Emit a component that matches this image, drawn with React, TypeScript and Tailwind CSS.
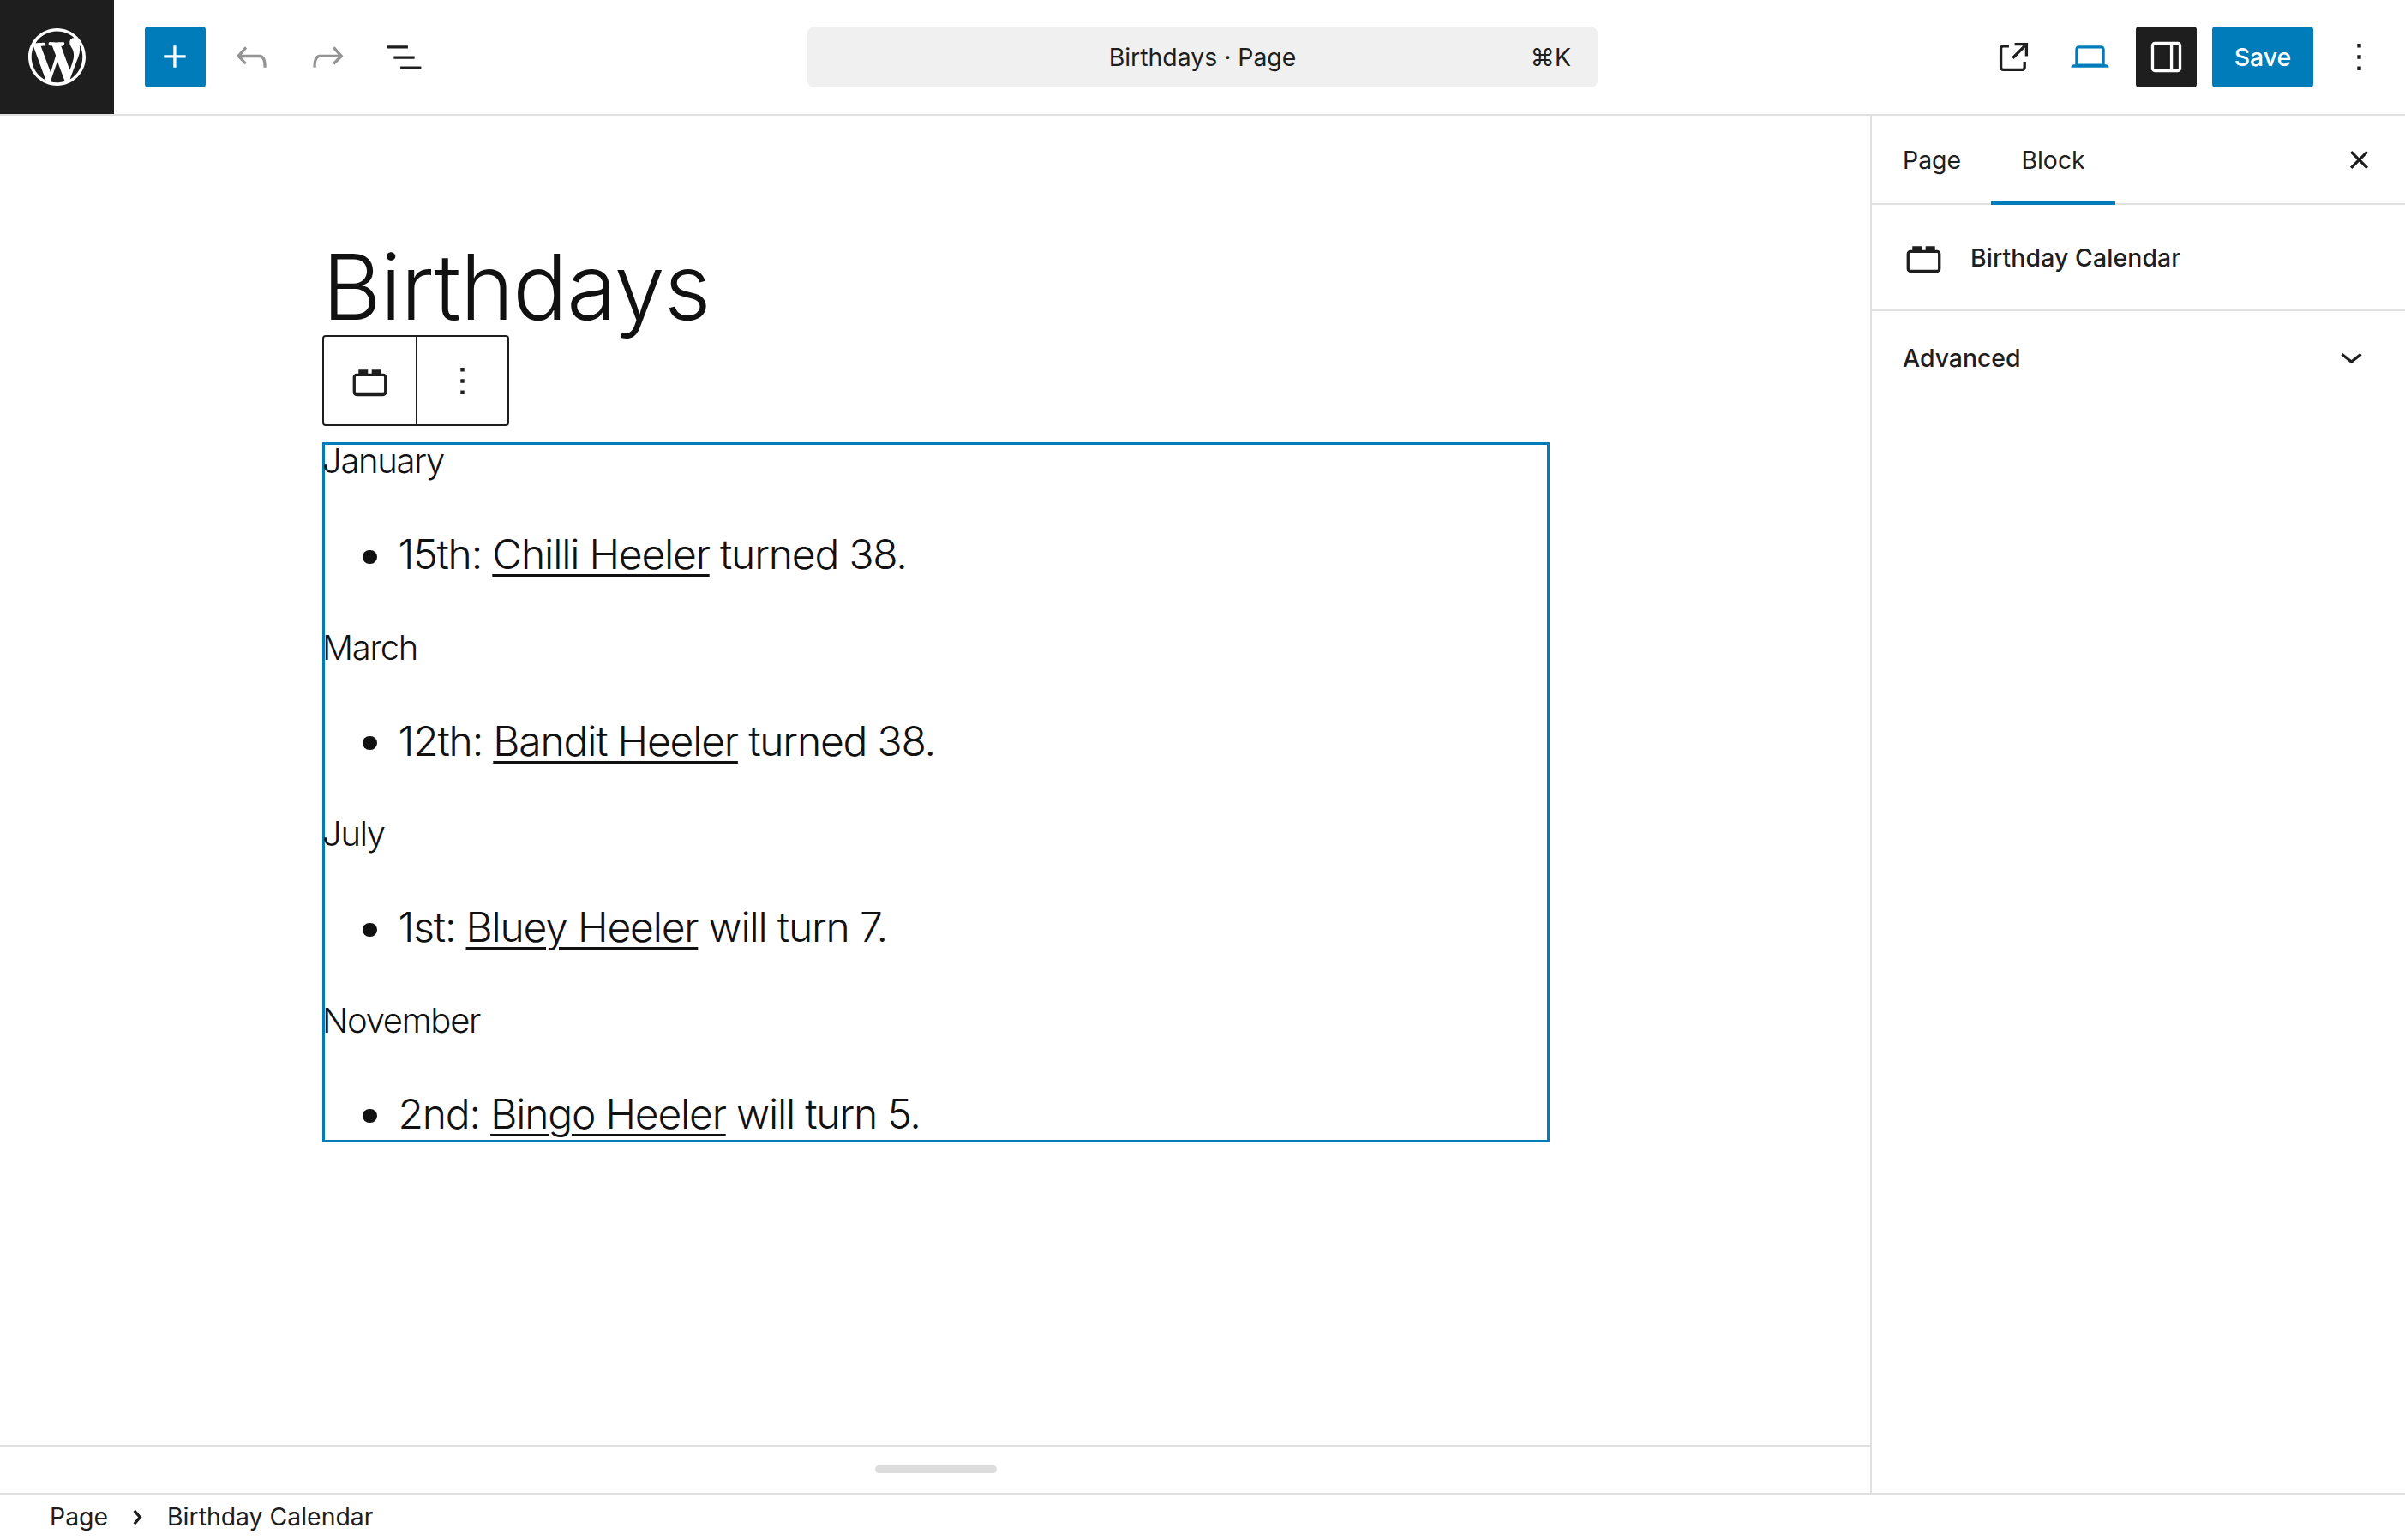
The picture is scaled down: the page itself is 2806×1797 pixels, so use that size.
import React from "react";

const P = {
  wp: "M20 10c0-5.51-4.49-10-10-10C4.48 0 0 4.49 0 10c0 5.52 4.48 10 10 10 5.51 0 10-4.48 10-10zM7.78 15.37L4.37 6.22c.55-.02 1.17-.08 1.17-.08.5-.06.44-1.13-.06-1.11 0 0-1.45.11-2.37.11-.18 0-.37 0-.58-.01C4.12 2.69 6.87 1.07 10 1.07c2.33 0 4.45.87 6.05 2.34-.68-.11-1.65.39-1.65 1.58 0 .74.45 1.36.9 2.1.35.61.55 1.36.55 2.46 0 1.49-1.4 5-1.4 5l-3.03-8.37c.54-.02.82-.17.82-.17.5-.05.44-1.25-.06-1.22 0 0-1.44.12-2.38.12-.87 0-2.33-.12-2.33-.12-.5-.03-.56 1.2-.06 1.22l.92.08 1.26 3.41zM17.41 10c.24-.64.74-1.87.43-4.25.7 1.29 1.05 2.71 1.05 4.25 0 3.29-1.73 6.24-4.4 7.78.97-2.59 1.94-5.2 2.92-7.78zM6.1 18.09C3.12 16.65 1.11 13.53 1.11 10c0-1.3.23-2.48.72-3.59C3.25 10.3 4.67 14.2 6.1 18.09zm4.03-6.63l2.58 6.98c-.86.29-1.76.45-2.71.45-.79 0-1.57-.11-2.29-.33.81-2.38 1.62-4.74 2.42-7.1z",
  plus: "M11 12.5V17.5H12.5V12.5H17.5V11H12.5V6H11V11H6V12.5H11Z",
  undo: "M18.3 11.7c-.6-.6-1.4-.9-2.3-.9H6.7l2.9-3.3-1.1-1-4.5 5L8.5 16l1-1-2.7-2.7H16c.5 0 .9.2 1.3.5 1 1 1 3.4 1 4.5v.3h1.5v-.2c0-1.5 0-4.3-1.5-5.7z",
  redo: "M15.6 6.5l-1.1 1 2.9 3.3H8c-.9 0-1.7.3-2.3.9-1.4 1.5-1.4 4.2-1.4 5.6v.2h1.5v-.3c0-1.1 0-3.5 1-4.5.3-.3.7-.5 1.3-.5h9.2L14.5 15l1.1 1.1 4.6-4.6-4.6-5z",
  list: "M3 6h11v1.5H3V6Zm3.5 5.5h11V13h-11v-1.5ZM21 17H10v1.5h11V17Z",
  ext: "M19.5 4.5h-7V6h4.44l-5.97 6.03 1.06 1.06L18 7.06V11.5h1.5v-7Zm-13 1a2 2 0 0 0-2 2v10a2 2 0 0 0 2 2h10a2 2 0 0 0 2-2v-3H17v3a.5.5 0 0 1-.5.5h-10a.5.5 0 0 1-.5-.5v-10a.5.5 0 0 1 .5-.5h3V5.5h-3Z",
  laptop: "M20.5 16h-.7V8c0-1.1-.9-2-2-2H6.2c-1.1 0-2 .9-2 2v8h-.7c-.8 0-1.5.7-1.5 1.5h20c0-.8-.7-1.5-1.5-1.5zM5.7 8c0-.3.2-.5.5-.5h11.6c.3 0 .5.2.5.5v7.6H5.7V8z",
  drawer: "M18 4H6c-1.1 0-2 .9-2 2v12c0 1.1.9 2 2 2h12c1.1 0 2-.9 2-2V6c0-1.1-.9-2-2-2zm-4 14.5H6c-.3 0-.5-.2-.5-.5V6c0-.3.2-.5.5-.5h8v13zm4.5-.5c0 .3-.2.5-.5.5h-2.5v-13H18c.3 0 .5.2.5.5v12z",
  more: "M13 19h-2v-2h2v2zm0-6h-2v-2h2v2zm0-6h-2V5h2v2z",
  close: "M12 13.06l3.712 3.713 1.061-1.06L13.061 12l3.712-3.712-1.06-1.06L12 10.938 8.288 7.227l-1.061 1.06L10.939 12l-3.712 3.712 1.06 1.061L12 13.061z",
  down: "M17.5 11.6L12 16l-5.5-4.4.9-1.2L12 14l4.5-3.6 1 1.2z",
  right: "M10.8622 8.04053L14.2805 12.0286L10.8622 16.0167L9.72327 15.0405L12.3049 12.0286L9.72327 9.01672L10.8622 8.04053Z",
  block: "M19 8h-1V6h-5v2h-2V6H6v2H5c-1.1 0-2 .9-2 2v8c0 1.1.9 2 2 2h14c1.1 0 2-.9 2-2v-8c0-1.1-.9-2-2-2zm.5 10c0 .3-.2.5-.5.5H5c-.3 0-.5-.2-.5-.5v-8c0-.3.2-.5.5-.5h14c.3 0 .5.2.5.5v8z",
};

function Icon({ d, className = "w-[53px] h-[53px]", box = "0 0 24 24" }: { d: string; className?: string; box?: string }) {
  return (
    <svg viewBox={box} className={className} fill="currentColor" aria-hidden="true">
      <path d={d} />
    </svg>
  );
}

function IconBtn({ d, className = "text-[#1e1e1e]" }: { d: string; className?: string }) {
  return (
    <button className={`w-[71px] h-[71px] flex items-center justify-center rounded-[4px] shrink-0 ${className}`}>
      <Icon d={d} />
    </button>
  );
}

const entries = [
  { month: "January", pre: "15th: ", name: "Chilli Heeler", post: " turned 38." },
  { month: "March", pre: "12th: ", name: "Bandit Heeler", post: " turned 38." },
  { month: "July", pre: "1st: ", name: "Bluey Heeler", post: " will turn 7." },
  { month: "November", pre: "2nd: ", name: "Bingo Heeler", post: " will turn 5." },
];

export default function App() {
  return (
    <div className="w-[2806px] h-[1797px] flex flex-col bg-white overflow-hidden font-['Inter',sans-serif] text-[#1e1e1e] text-[28.4px]">
      <header className="h-[135px] shrink-0 flex items-start border-b-2 border-[#e0e0e0]">
        <div className="flex-1 flex items-center h-[133px] pr-[18px]">
          <div className="w-[133px] h-[133px] bg-[#1e1e1e] flex items-center justify-center text-white shrink-0">
            <Icon d={P.wp} box="0 0 20 20" className="w-[67px] h-[67px]" />
          </div>
          <div className="flex items-center gap-[18px] ml-[36px]">
            <button className="w-[71px] h-[71px] bg-[#007cba] text-white rounded-[4px] flex items-center justify-center">
              <Icon d={P.plus} />
            </button>
            <IconBtn d={P.undo} className="text-[#949494]" />
            <IconBtn d={P.redo} className="text-[#949494]" />
            <IconBtn d={P.list} />
          </div>
        </div>
        <div className="w-[922px] h-[71px] mt-[31px] bg-[#f0f0f0] rounded-[8px] flex items-center shrink-0 relative">
          <span className="flex-1 text-center pt-[1px]">Birthdays · Page</span>
          <span className="absolute right-[31px] top-[15px]">⌘K</span>
        </div>
        <div className="flex-1 flex items-center justify-end gap-[18px] h-[133px] pr-[18px]">
          <IconBtn d={P.ext} />
          <IconBtn d={P.laptop} className="text-[#007cba]" />
          <IconBtn d={P.drawer} className="bg-[#1e1e1e] text-white" />
          <button className="w-[118px] h-[71px] bg-[#007cba] text-white rounded-[4px] font-medium pt-[1px]">Save</button>
          <IconBtn d={P.more} />
        </div>
      </header>

      <div className="flex-1 min-h-0 flex border-b-2 border-[#e0e0e0]">
        <main className="w-[2182px] shrink-0 flex flex-col">
          <div className="flex-1 min-h-0">
            <div className="w-[1432px] ml-[376px]">
              <h1 className="text-[106px] font-light leading-[120px] tracking-[-1px] text-[#111111] pt-[140px] h-[256px]">Birthdays</h1>
              <div className="w-[218px] h-[106px] border-2 border-[#1e1e1e] rounded-[4px] flex bg-white">
                <div className="w-[109px] border-r-2 border-[#1e1e1e] flex items-center justify-center">
                  <Icon d={P.block} />
                </div>
                <div className="flex-1 flex items-center justify-center">
                  <Icon d={P.more} />
                </div>
              </div>
              <div className="mt-[19px] h-[817px] box-border border-[3px] border-[#007cba]">
                <div className="-mx-[3px] -mt-[5px] text-[#111111] font-light">
                  {entries.map((e) => (
                    <section key={e.month} className="h-[217.5px]">
                      <p className="text-[40px] leading-[48px] tracking-[-1.3px]">{e.month}</p>
                      <ul className="mt-[49px] pl-[46.5px] text-[48px] leading-[72px] tracking-[-1.2px]">
                        <li className="flex items-center gap-[25px]">
                          <div className="w-[17px] h-[16px] mt-[5px] rounded-full bg-[#111111] shrink-0" />
                          <span>
                            {e.pre}
                            <a className="underline underline-offset-[6px] decoration-[3px]">{e.name}</a>
                            {e.post}
                          </span>
                        </li>
                      </ul>
                    </section>
                  ))}
                </div>
              </div>
            </div>
          </div>
          <div className="h-[56px] shrink-0 border-t-2 border-[#e0e0e0] flex items-center justify-center">
            <div className="w-[142px] h-[9px] ml-[2px] -mt-[1px] rounded-full bg-[#dddddd]" />
          </div>
        </main>

        <aside className="flex-1 border-l-2 border-[#e0e0e0]">
          <div className="h-[104px] border-b-2 border-[#e0e0e0] flex items-stretch">
            <div className="pl-[36px] pr-[35px] pt-[2px] flex items-center">Page</div>
            <div className="w-[145px] -mb-[2px] pt-[4px] border-b-[4px] border-[#007cba] flex items-center justify-center">Block</div>
            <div className="ml-auto pr-[27px] flex items-center">
              <Icon d={P.close} />
            </div>
          </div>
          <div className="h-[124px] border-b-2 border-[#e0e0e0] flex items-center pl-[34px] gap-[28px] font-medium">
            <Icon d={P.block} />
            <span className="pt-[2px] tracking-[0.1px]">Birthday Calendar</span>
          </div>
          <div className="h-[110px] flex items-center justify-between pl-[36px] pr-[36px] font-medium">
            <span>Advanced</span>
            <Icon d={P.down} className="w-[53px] h-[53px] -mt-[6px]" />
          </div>
        </aside>
      </div>

      <footer className="h-[53px] shrink-0 flex items-center pl-[58px] gap-[8px]">
        <span>Page</span>
        <Icon d={P.right} />
        <span>Birthday Calendar</span>
      </footer>
    </div>
  );
}
